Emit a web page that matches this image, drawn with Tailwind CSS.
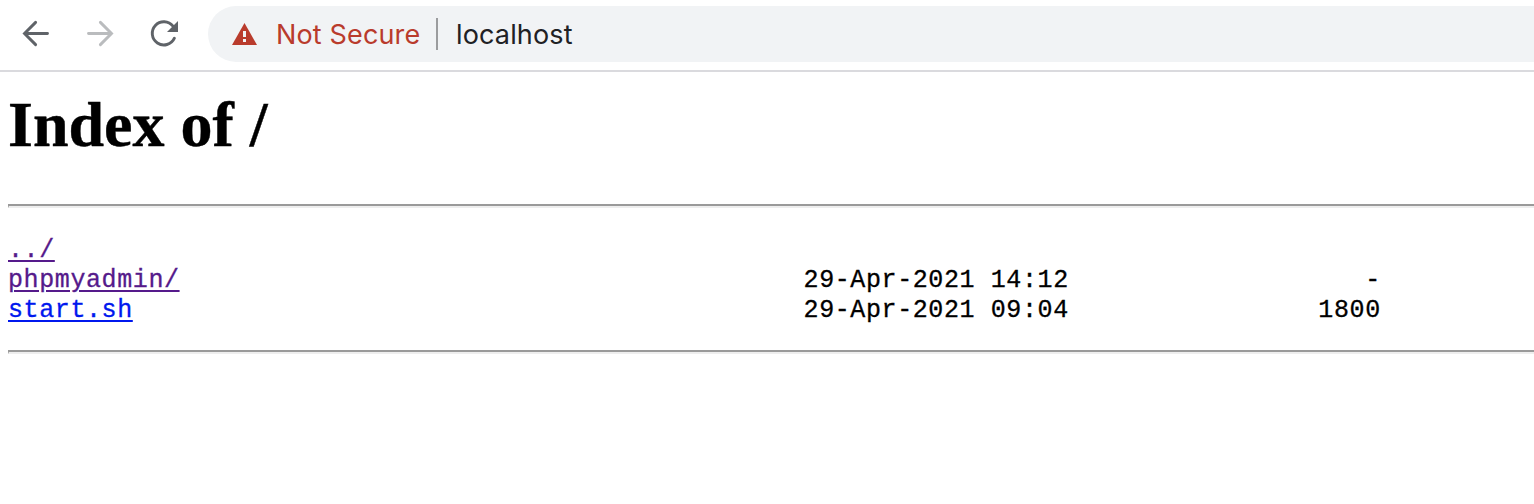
<!DOCTYPE html>
<html lang="en">
<head>
<meta charset="utf-8">
<title>Index of /</title>
<script src="https://cdn.jsdelivr.net/npm/@tailwindcss/browser@4"></script>
</head>
<body class="h-[504px] overflow-hidden bg-white text-black">
<header class="flex h-[72px] items-start border-b-2 border-[#dadade] pt-1.5">
  <nav class="flex h-14 w-[208px] shrink-0 items-center">
    <svg class="h-14 w-[208px]" viewBox="0 6 208 56" fill="none" stroke-width="2.9" stroke-linecap="round">
      <path d="M47.5 33.5H25M35.6 22.4 24.5 33.5 35.6 44.6" stroke="#5f6368"/>
      <path d="M88.5 33.5H111M100.4 22.4 111.5 33.5 100.4 44.6" stroke="#babcbe"/>
      <path d="M174.4 38.2A11.6 11.6 0 1 1 173 26.2" stroke="#5f6368"/>
      <path d="M178 21V32H167Z" fill="#5f6368"/>
    </svg>
  </nav>
  <div class="flex h-14 grow items-center rounded-l-full bg-[#f1f3f5] pl-6 font-['Inter',sans-serif] text-[27px] leading-8 whitespace-nowrap">
    <svg class="h-[22px] w-[25px] shrink-0" viewBox="0 0 25 22">
      <path d="M12.5 0 25 22H0Z" fill="#b93b2c"/>
      <path d="M11 8h3v6h-3zM11 16h3v3h-3z" fill="#f1f3f5"/>
    </svg>
    <span class="ml-[19px] w-[160px] pt-0.5 tracking-[0.15px] text-[#b93b2c]">Not Secure</span>
    <span class="h-8 w-0.5 bg-[#9b9c9e]"></span>
    <span class="ml-[18px] pt-0.5 tracking-[0.15px] text-[#202124]">localhost</span>
  </div>
</header>
<main class="pl-2">
  <h1 class="flex h-[132px] items-start pt-[17px] font-['Liberation_Serif',serif] text-[64px] leading-[72px] font-bold [-webkit-text-stroke:0.4px]">Index of /</h1>
  <hr class="h-1 border-t-2 border-b-2 border-l border-t-[#9a9a9a] border-b-[#eeeeee] border-l-[#9a9a9a]">
  <pre class="h-[142px] pt-7 font-['Liberation_Mono',monospace] text-[25px] leading-[30px] tracking-[0.597px] [-webkit-text-stroke:0.3px]"><a class="text-[#551a8b] underline decoration-2 underline-offset-[3px]" href="#">../</a>
<a class="text-[#551a8b] underline decoration-2 underline-offset-[3px]" href="#">phpmyadmin/</a>                                        29-Apr-2021 14:12                   -
<a class="text-[#0018ee] underline decoration-2 underline-offset-[3px]" href="#">start.sh</a>                                           29-Apr-2021 09:04                1800</pre>
  <hr class="h-1 border-t-2 border-b-2 border-l border-t-[#9a9a9a] border-b-[#eeeeee] border-l-[#9a9a9a]">
</main>
</body>
</html>
